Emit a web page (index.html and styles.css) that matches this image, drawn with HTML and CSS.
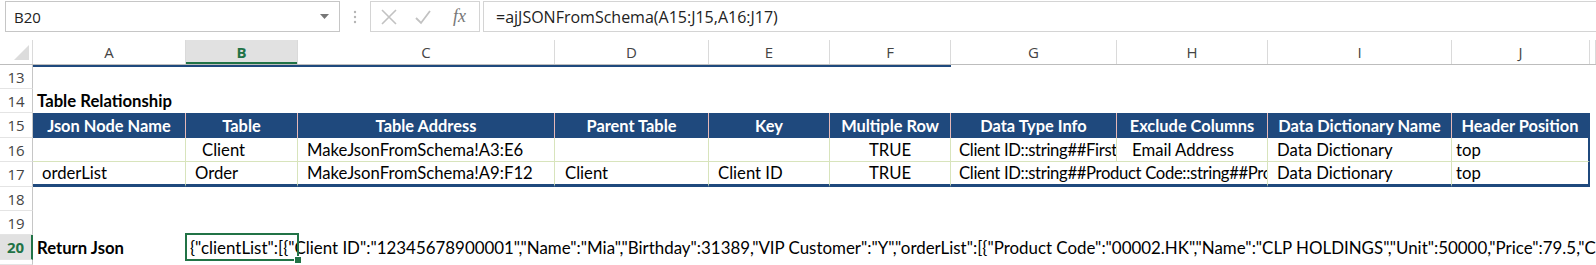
FILE: index.html
```html
<!DOCTYPE html>
<html lang="en">

<head>
  <meta charset="UTF-8">
  <meta name="viewport" content="width=device-width, initial-scale=1.0">
  <title>Table Relationship</title>
  <link rel="stylesheet" href="styles.css">
</head>

<body>

  <div id="toolbar">
    <div id="namebox">
      <span>B20</span>
      <svg class="caret" width="9" height="5" viewBox="0 0 9 5"><path d="M0 0h9L4.5 5z" fill="#777" /></svg>
    </div>
    <div id="grip">
      <svg width="4" height="16" viewBox="0 0 4 16">
        <circle cx="2" cy="3" r="1.2" fill="#b5b5b5" />
        <circle cx="2" cy="8" r="1.2" fill="#b5b5b5" />
        <circle cx="2" cy="13" r="1.2" fill="#b5b5b5" />
      </svg>
    </div>
    <div id="fxbtns">
      <svg class="btn" width="18" height="18" viewBox="0 0 18 18"><path d="M2 2l14 14M16 2L2 16" stroke="#c2c2c2" stroke-width="1.6" fill="none" /></svg>
      <svg class="btn" width="18" height="18" viewBox="0 0 18 18"><path d="M2 10l5 5L16 3" stroke="#c2c2c2" stroke-width="1.8" fill="none" /></svg>
      <span class="fx">fx</span>
    </div>
    <div id="formula">=ajJSONFromSchema(A15:J15,A16:J17)</div>
  </div>

  <div id="sheet">
    <div class="row colhdr">
      <div class="corner"><svg width="16" height="16" viewBox="0 0 16 16"><path d="M15 0v15H0z" fill="#dcdcdc" /></svg></div>
      <div class="ch">A</div>
      <div class="ch sel">B</div>
      <div class="ch">C</div>
      <div class="ch">D</div>
      <div class="ch">E</div>
      <div class="ch">F</div>
      <div class="ch">G</div>
      <div class="ch">H</div>
      <div class="ch">I</div>
      <div class="ch">J</div>
      <div class="ch"></div>
    </div>

    <div class="row r24">
      <div class="rh">13</div>
      <div class="c topline"></div>
      <div class="c topline"></div>
      <div class="c topline"></div>
      <div class="c topline"></div>
      <div class="c topline"></div>
      <div class="c topline"></div>
    </div>

    <div class="row r24">
      <div class="rh">14</div>
      <div class="c p4 bold span2">Table Relationship</div>
    </div>

    <div class="row r25">
      <div class="rh">15</div>
      <div class="c th">Json Node Name</div>
      <div class="c th">Table</div>
      <div class="c th">Table Address</div>
      <div class="c th">Parent Table</div>
      <div class="c th">Key</div>
      <div class="c th">Multiple Row</div>
      <div class="c th">Data Type Info</div>
      <div class="c th">Exclude Columns</div>
      <div class="c th">Data Dictionary Name</div>
      <div class="c th last">Header Position</div>
    </div>

    <div class="row r24">
      <div class="rh">16</div>
      <div class="c td"></div>
      <div class="c td p16">Client</div>
      <div class="c td">MakeJsonFromSchema!A3:E6</div>
      <div class="c td"></div>
      <div class="c td"></div>
      <div class="c td mid">TRUE</div>
      <div class="c td p8 tight">Client ID::string##First Name::string##Last Name::string</div>
      <div class="c td p15">Email Address</div>
      <div class="c td">Data Dictionary</div>
      <div class="c td p4 last">top</div>
    </div>

    <div class="row r25">
      <div class="rh">17</div>
      <div class="c td bottom">orderList</div>
      <div class="c td bottom">Order</div>
      <div class="c td bottom">MakeJsonFromSchema!A9:F12</div>
      <div class="c td bottom p10">Client</div>
      <div class="c td bottom">Client ID</div>
      <div class="c td bottom mid">TRUE</div>
      <div class="c td bottom p8 span2 tight">Client ID::string##Product Code::string##Product Name::string</div>
      <div class="c td bottom">Data Dictionary</div>
      <div class="c td bottom p4 last">top</div>
    </div>

    <div class="row r24">
      <div class="rh">18</div>
    </div>

    <div class="row r24">
      <div class="rh">19</div>
    </div>

    <div class="row r25 current">
      <div class="rh active">20</div>
      <div class="c p4 bold">Return Json</div>
      <div class="c p4 json">{"clientList":[{"Client ID":"12345678900001","Name":"Mia","Birthday":31389,"VIP Customer":"Y","orderList":[{"Product Code":"00002.HK","Name":"CLP HOLDINGS","Unit":50000,"Price":79.5,"Currency":"HKD"}]}]}</div>
      <span class="selbox"><span class="handle"></span></span>
    </div>

    <div class="row r5">
      <div class="rh"></div>
    </div>
  </div>

</body>

</html>
```

FILE: styles.css
```css
body {
  margin: 0;
  width: 1596px;
  height: 265px;
  overflow: hidden;
  background: #fff;
  font-family: 'Open Sans', 'Noto Sans', sans-serif;
}

/* formula bar */

#toolbar {
  display: flex;
  height: 31px;
  padding-top: 1px;
  margin-bottom: 8px;
}

#namebox {
  box-sizing: border-box;
  width: 335px;
  margin-left: 5px;
  border: 1px solid #c6c6c6;
  display: flex;
  align-items: center;
  justify-content: space-between;
  padding: 0 10px 0 8px;
  font-size: 15px;
  color: #222;
}

#grip {
  width: 30px;
  display: flex;
  align-items: center;
  justify-content: center;
}

#fxbtns {
  box-sizing: border-box;
  width: 110px;
  border: 1px solid #d4d4d4;
  display: flex;
  align-items: center;
  padding-left: 9px;
  gap: 16px;
}

.fx {
  font-family: 'Liberation Serif', serif;
  font-style: italic;
  font-size: 18px;
  color: #777;
  margin-left: 5px;
}

#formula {
  flex: 1;
  margin-left: 3px;
  border: 1px solid #d4d4d4;
  border-right: none;
  display: flex;
  align-items: center;
  padding-left: 12px;
  font-size: 16px;
  color: #222;
}

/* grid */

#sheet {
  --cols: 33px 153px 112px 257px 154px 121px 121px 166px 151px 184px 138px 6px;
  overflow: hidden;
}

.row {
  display: grid;
  grid-template-columns: var(--cols);
}

.r24 {
  height: 24px;
}

.r25 {
  height: 25px;
}

.r5 {
  height: 5px;
  overflow: hidden;
}

.colhdr {
  height: 25px;
  box-sizing: border-box;
  border-bottom: 1px solid #bdbdbd;
}

.corner {
  border-right: 1px solid #dadada;
  display: flex;
  align-items: flex-end;
  justify-content: flex-end;
  padding: 0 2px 3px 0;
}

.ch {
  border-right: 1px solid #dadada;
  display: flex;
  align-items: center;
  justify-content: center;
  font-size: 15px;
  color: #444;
}

.ch.sel {
  background: #e1e1e1;
  color: #217346;
  font-weight: bold;
  box-shadow: inset 0 -2px 0 #217346;
}

.rh {
  box-sizing: border-box;
  border-right: 1px solid #c6c6c6;
  border-bottom: 1px solid #e4e4e4;
  display: flex;
  align-items: center;
  justify-content: center;
  font-size: 15px;
  color: #444;
}

.rh.active {
  background: #e1e1e1;
  color: #217346;
  font-weight: bold;
  border-right: 2px solid #217346;
}

.c {
  box-sizing: border-box;
  display: flex;
  align-items: center;
  padding-left: 9px;
  white-space: nowrap;
  overflow: hidden;
  font-family: 'Lato', sans-serif;
  font-size: 16.7px;
  color: #000;
}

.tight {
  letter-spacing: -0.35px;
}

.topline {
  border-top: 2px solid #1f497d;
}

.bold {
  font-weight: bold;
}

.span2 {
  grid-column: span 2;
}

.p4 {
  padding-left: 4px;
}

.p8 {
  padding-left: 8px;
}

.p10 {
  padding-left: 10px;
}

.p15 {
  padding-left: 15px;
}

.p16 {
  padding-left: 16px;
}

.mid {
  justify-content: center;
  padding-left: 0;
}

/* table */

.th {
  background: #1f497d;
  color: #fff;
  font-weight: bold;
  font-size: 16.4px;
  justify-content: center;
  padding-left: 0;
  border-right: 1px solid #e6b8b7;
}

.th.last {
  border-right: 2px solid #1f497d;
}

.td {
  border-right: 1px solid #d8e4bc;
  border-bottom: 1px solid #d8e4bc;
}

.td.last {
  border-right: 2px solid #1f497d;
}

.td.bottom {
  border-bottom: 3px solid #1f497d;
}

/* selected cell */

.current {
  position: relative;
}

.json {
  grid-column: span 10;
  font-size: 16.9px;
}

.selbox {
  position: absolute;
  grid-column: 3 / 4;
  grid-row: 1 / 2;
  top: -2px;
  bottom: -1px;
  left: -1px;
  right: -1px;
  border: 2px solid #217346;
}

.handle {
  position: absolute;
  right: -5px;
  bottom: -5px;
  width: 6px;
  height: 6px;
  background: #217346;
  border: 1px solid #fff;
}
```
